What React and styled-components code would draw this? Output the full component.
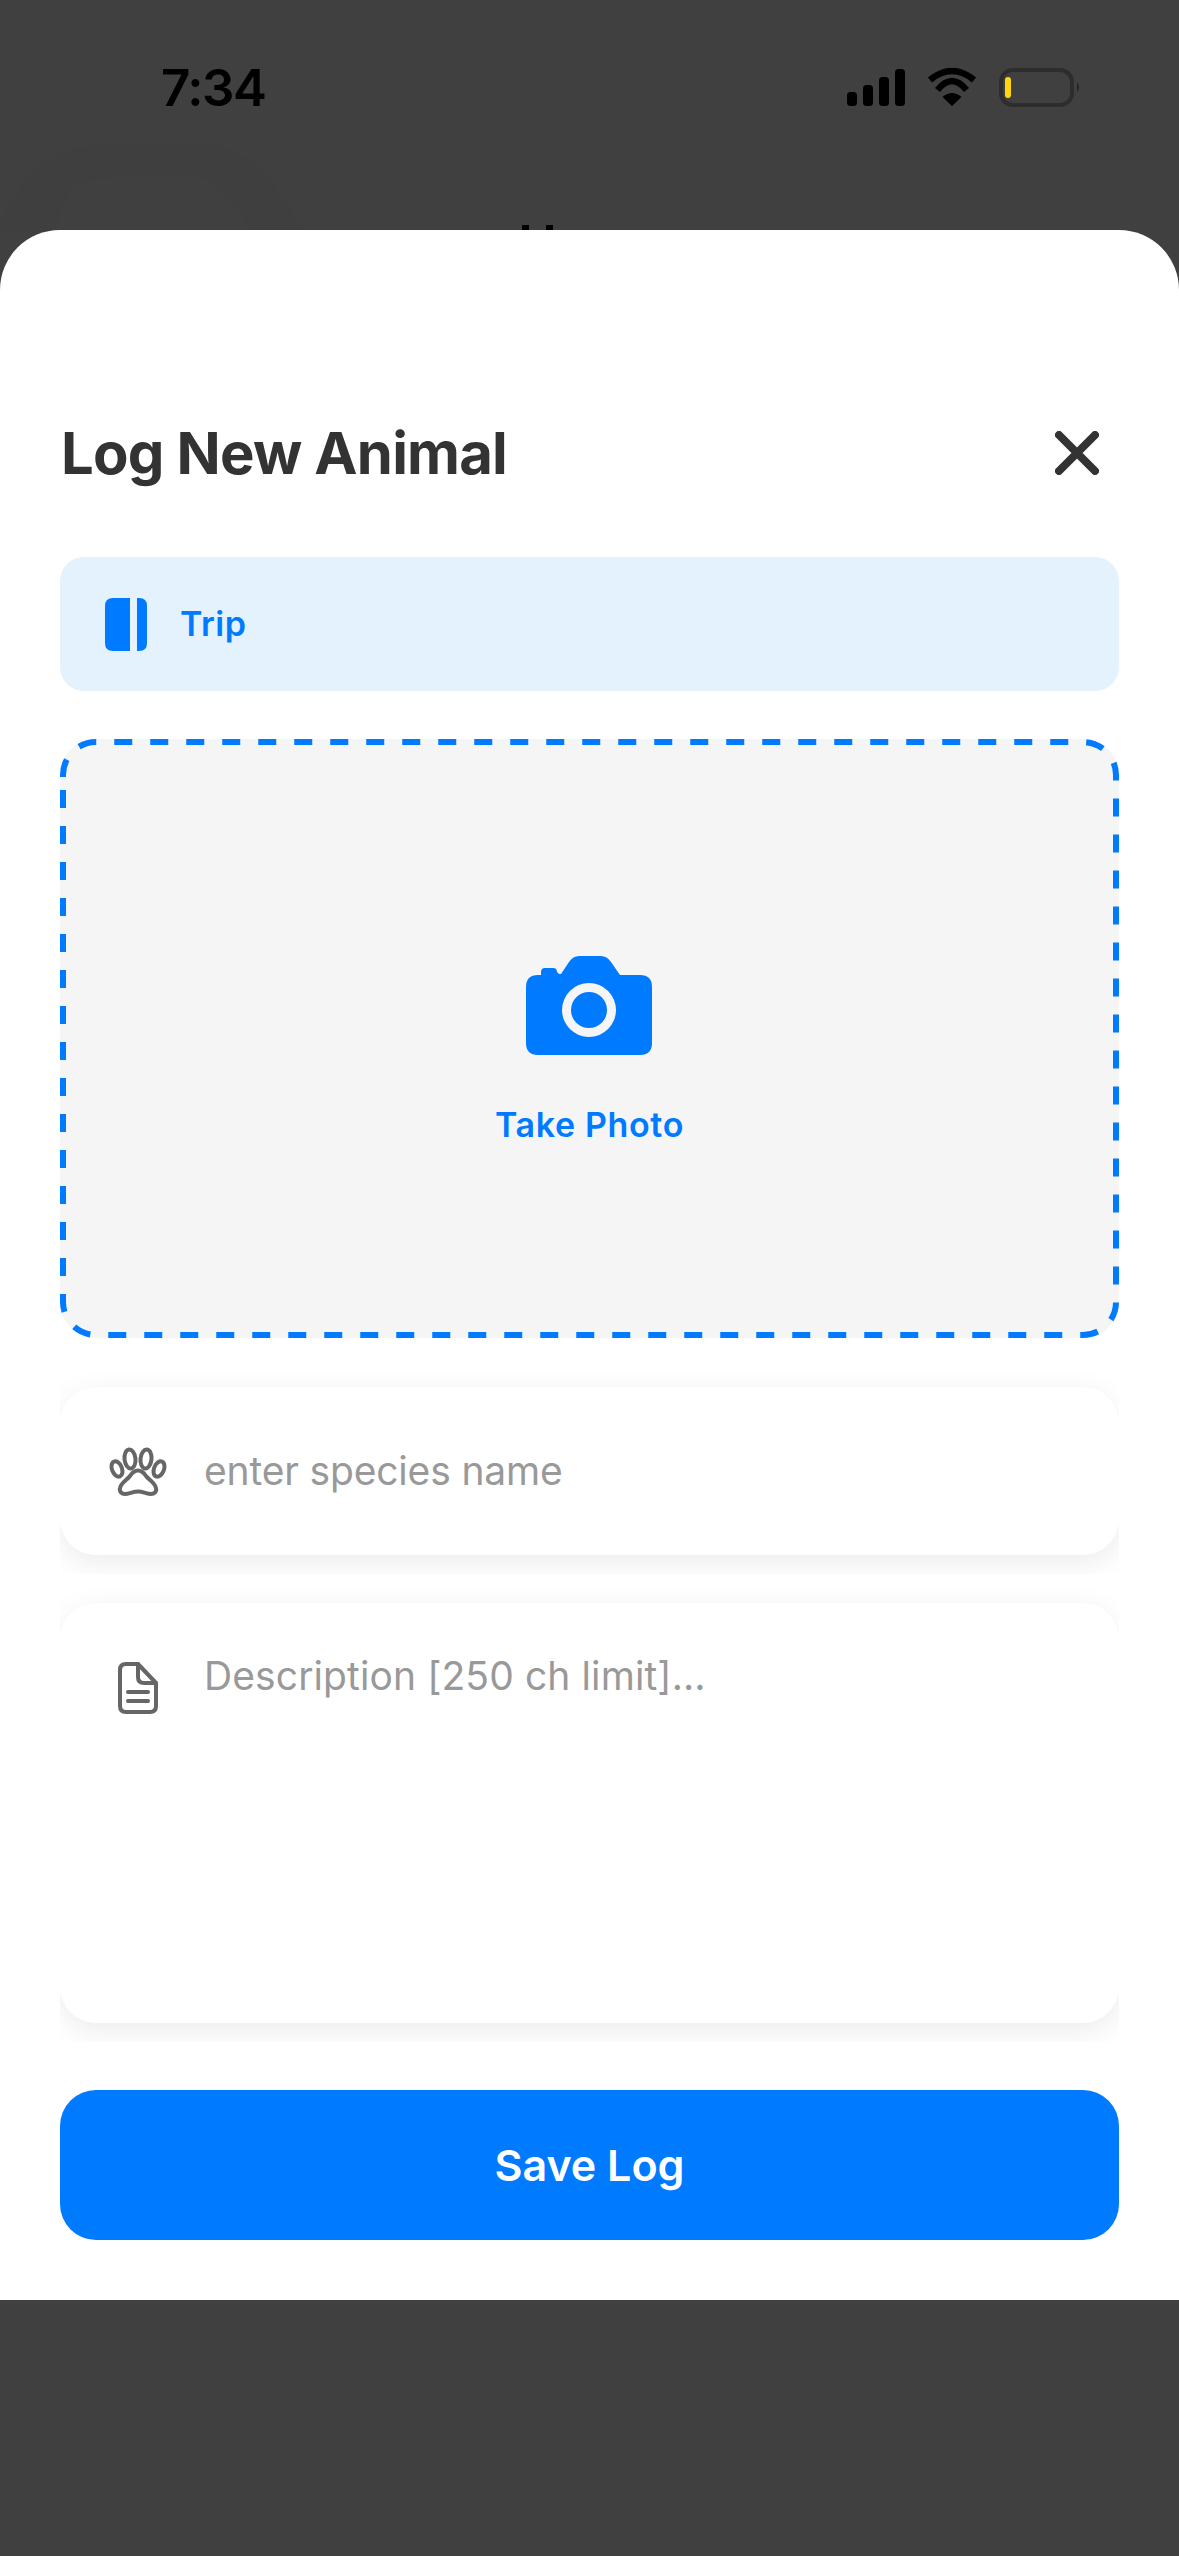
import styled, { createGlobalStyle } from 'styled-components';

const BLUE = '#007aff';

const GlobalStyle = createGlobalStyle`
  html, body {
    margin: 0;
    padding: 0;
    background: #404040;
  }
  * {
    box-sizing: border-box;
  }
`;

const Screen = styled.div`
  position: relative;
  width: 1179px;
  height: 2556px;
  overflow: hidden;
  background: #404040;
  font-family: Inter, 'Noto Sans', sans-serif;
`;

const StatusBar = styled.div`
  height: 230px;
  padding: 68px 98px 0 161px;
  display: flex;
  justify-content: space-between;
  align-items: flex-start;
`;

const Time = styled.span`
  font-size: 51px;
  line-height: 39px;
  font-weight: 600;
  letter-spacing: -1.5px;
  color: #000;
`;

const StatusIcons = styled.div`
  display: flex;
  align-items: flex-start;
  gap: 22px;
`;

const Glyph = styled.svg`
  display: block;
  flex: none;
`;

const GhostShape = styled.svg`
  position: absolute;
  left: 0;
  top: 140px;
`;

const PeekingMark = styled.div`
  position: absolute;
  left: 522px;
  top: 225px;
  width: 31px;
  height: 5px;
  border-left: 7px solid #000;
  border-right: 7px solid #000;
`;

const Sheet = styled.div`
  position: relative;
  height: 2070px;
  padding: 186px 60px 60px;
  display: flex;
  flex-direction: column;
  background: #fff;
  border-radius: 60px 60px 0 0;
`;

const Header = styled.div`
  height: 74px;
  margin-bottom: 67px;
  padding: 0 20px 0 1px;
  display: flex;
  justify-content: space-between;
  align-items: center;
`;

const Title = styled.h1`
  margin: 0;
  font-size: 58px;
  line-height: 74px;
  font-weight: 700;
  letter-spacing: -0.8px;
  color: #333;
`;

const TripBar = styled.div`
  height: 134px;
  margin-bottom: 48px;
  padding-left: 45px;
  display: flex;
  align-items: center;
  gap: 33px;
  background: #e3f2fd;
  border-radius: 24px;
`;

const TripLabel = styled.span`
  margin-top: -2px;
  font-size: 34px;
  font-weight: 600;
  letter-spacing: 0.5px;
  color: ${BLUE};
`;

const PhotoBox = styled.div`
  position: relative;
  height: 599px;
  margin-bottom: 49px;
  padding-top: 217px;
  display: flex;
  flex-direction: column;
  align-items: center;
  background: #f5f5f5;
  border-radius: 36px;
`;

const DashedOutline = styled.svg`
  position: absolute;
  inset: 0;
`;

const CameraSlot = styled.div`
  margin-right: 2px;
`;

const PhotoLabel = styled.span`
  margin-top: 50px;
  font-size: 34px;
  line-height: 40px;
  font-weight: 600;
  letter-spacing: 0.65px;
  color: ${BLUE};
`;

const Field = styled.div`
  height: ${(p) => p.$height}px;
  margin-bottom: ${(p) => p.$gap}px;
  padding: ${(p) => p.$padTop}px 0 0 50px;
  display: flex;
  align-items: ${(p) => (p.$multiline ? 'flex-start' : 'center')};
  gap: ${(p) => (p.$multiline ? 46 : 36)}px;
  background: #fff;
  border-radius: 36px;
  box-shadow: 0 8px 30px rgba(0, 0, 0, 0.08);
  clip-path: inset(-15px 0 -19px 0);
`;

const FieldIcon = styled.svg`
  display: block;
  flex: none;
  margin-left: ${(p) => p.$inset}px;
  margin-top: ${(p) => p.$top}px;
`;

const Placeholder = styled.span`
  font-size: 39px;
  line-height: 46px;
  font-weight: 400;
  letter-spacing: ${(p) => p.$tracking}px;
  color: #999;
`;

const SaveButton = styled.button`
  height: 150px;
  border: 0;
  padding: 0;
  background: ${BLUE};
  border-radius: 36px;
  font-family: inherit;
  font-size: 43px;
  font-weight: 600;
  color: #fff;
`;

const SignalIcon = () => (
  <Glyph width="58" height="39" viewBox="0 0 58 39">
    <rect x="0" y="24" width="10" height="14" rx="3.5" fill="#000" />
    <rect x="16" y="17" width="10" height="21" rx="3.5" fill="#000" />
    <rect x="32" y="9" width="10" height="29" rx="3.5" fill="#000" />
    <rect x="48" y="1" width="10" height="37" rx="3.5" fill="#000" />
  </Glyph>
);

const WifiIcon = () => (
  <Glyph width="50" height="39" viewBox="0 0 50 39">
    <path d="M3 12 Q25 -6 47 12" fill="none" stroke="#000" strokeWidth="6.5" />
    <path d="M10.5 22 Q25 4 39.5 22" fill="none" stroke="#000" strokeWidth="6.5" />
    <path d="M25 38 L15.5 29 Q25 21 34.5 29 Z" fill="#000" />
  </Glyph>
);

const BatteryIcon = () => (
  <Glyph width="82" height="39" viewBox="0 0 82 39">
    <rect x="2" y="2" width="71" height="35" rx="12" fill="none" stroke="#2e2d2c" strokeWidth="4" />
    <rect x="6" y="9" width="6" height="21" rx="3" fill="#ffd60a" />
    <path d="M78 14 Q82 19 78 24 Z" fill="#242424" />
  </Glyph>
);

const CloseIcon = () => (
  <Glyph width="44" height="44" viewBox="0 0 44 44">
    <path d="M4 4 L40 40 M40 4 L4 40" stroke="#333" strokeWidth="8" strokeLinecap="round" />
  </Glyph>
);

const TripIcon = () => (
  <Glyph width="42" height="53" viewBox="0 0 42 53">
    <path d="M8 0 H25 V53 H8 Q0 53 0 45 V8 Q0 0 8 0 Z" fill={BLUE} />
    <path d="M32 0 H34 Q42 0 42 8 V45 Q42 53 34 53 H32 Z" fill={BLUE} />
  </Glyph>
);

const CameraIcon = () => (
  <Glyph width="126" height="99" viewBox="0 0 126 99">
    <path
      fillRule="evenodd"
      fill={BLUE}
      d="M12 19 H15 V16 Q15 12 19 12 H27 Q31 12 31 16 L33 18 H35 L43 6 Q47 0 53 0 H75 Q81 0 85 6 L94 19 H114 Q126 19 126 31 V87 Q126 99 114 99 H12 Q0 99 0 87 V31 Q0 19 12 19 Z
         M63 27 A27 27 0 1 0 63 81 A27 27 0 1 0 63 27 Z
         M63 36 A18 18 0 1 1 63 72 A18 18 0 1 1 63 36 Z"
    />
  </Glyph>
);

const PawIcon = () => (
  <FieldIcon $inset={-2} $top={0} width="60" height="52" viewBox="0 0 60 52">
    <g fill="none" stroke="#666" strokeWidth="4">
      <ellipse cx="9" cy="24" rx="5" ry="8" transform="rotate(-22 9 24)" />
      <ellipse cx="22" cy="14" rx="5.5" ry="9.5" transform="rotate(-6 22 14)" />
      <ellipse cx="38" cy="14" rx="5.5" ry="9.5" transform="rotate(6 38 14)" />
      <ellipse cx="51" cy="24" rx="5" ry="8" transform="rotate(22 51 24)" />
      <path d="M30 25.5 C26 25.5 24 28 22 31 C19 35 13 38 12 43 C11 47 14 49 17 49 C21 49 25 46.5 30 46.5 C35 46.5 39 49 43 49 C46 49 49 47 48 43 C47 38 41 35 38 31 C36 28 34 25.5 30 25.5 Z" />
    </g>
  </FieldIcon>
);

const DocIcon = () => (
  <FieldIcon $inset={8} $top={9} width="40" height="52" viewBox="0 0 40 52">
    <g fill="none" stroke="#666" strokeWidth="4" strokeLinecap="round" strokeLinejoin="round">
      <path d="M8 2 H20 L38 21 V44 Q38 50 32 50 H8 Q2 50 2 44 V8 Q2 2 8 2 Z" />
      <path d="M20 2 V15 Q20 21 26 21 H38" />
      <path d="M10 30 H30 M10 39 H30" />
    </g>
  </FieldIcon>
);

// Dash phase measured from the reference: the path opens on the left side just under the corner.
const OUTLINE =
  'M3 38 V36 A33 33 0 0 1 36 3 H1023 A33 33 0 0 1 1056 36 V563 A33 33 0 0 1 1023 596 H36 A33 33 0 0 1 3 563 V38';

export default function App() {
  return (
    <Screen>
      <GlobalStyle />
      <StatusBar>
        <Time>7:34</Time>
        <StatusIcons>
          <SignalIcon />
          <WifiIcon />
          <BatteryIcon />
        </StatusIcons>
      </StatusBar>
      <GhostShape width="310" height="90" viewBox="0 0 310 90">
        <path d="M0 80 Q30 22 73 8 Q140 0 215 5 Q262 12 302 90 H0 Z" fill="rgba(0,0,0,0.012)" />
        <path d="M57 90 Q64 45 88 40 Q145 34 203 38 Q232 52 249 90 Z" fill="rgba(255,255,255,0.006)" />
      </GhostShape>
      <PeekingMark />
      <Sheet>
        <Header>
          <Title>Log New Animal</Title>
          <CloseIcon />
        </Header>
        <TripBar>
          <TripIcon />
          <TripLabel>Trip</TripLabel>
        </TripBar>
        <PhotoBox>
          <DashedOutline width="1059" height="599" viewBox="0 0 1059 599">
            <path d={OUTLINE} fill="none" stroke={BLUE} strokeWidth="6" strokeDasharray="18 18" />
          </DashedOutline>
          <CameraSlot>
            <CameraIcon />
          </CameraSlot>
          <PhotoLabel>Take Photo</PhotoLabel>
        </PhotoBox>
        <Field $height={168} $gap={48} $padTop={0}>
          <PawIcon />
          <Placeholder $tracking={-0.17}>enter species name</Placeholder>
        </Field>
        <Field $height={420} $gap={67} $padTop={50} $multiline>
          <DocIcon />
          <Placeholder $tracking={0.1}>Description [250 ch limit]...</Placeholder>
        </Field>
        <SaveButton>Save Log</SaveButton>
      </Sheet>
    </Screen>
  );
}
